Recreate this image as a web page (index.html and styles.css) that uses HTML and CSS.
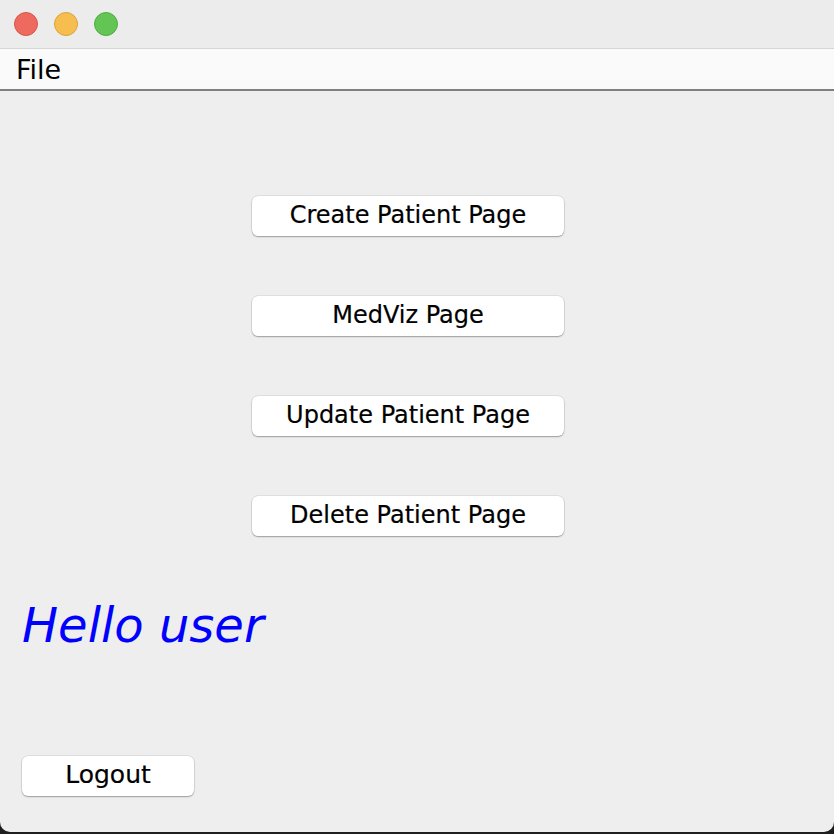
FILE: index.html
```html
<!DOCTYPE html>
<html>
<head>
<meta charset="utf-8">
<link rel="stylesheet" href="styles.css">
</head>
<body>
<div class="window">
  <div class="titlebar">
    <span class="light red"></span>
    <span class="light yellow"></span>
    <span class="light green"></span>
  </div>
  <div class="menubar"><span class="menu">File</span></div>
  <div class="content">
    <div class="actions">
      <button class="btn wide">Create Patient Page</button>
      <button class="btn wide">MedViz Page</button>
      <button class="btn wide">Update Patient Page</button>
      <button class="btn wide">Delete Patient Page</button>
    </div>
    <div class="hello">Hello user</div>
    <button class="btn logout">Logout</button>
  </div>
</div>
</body>
</html>
```
FILE: styles.css
```css
html, body {
  margin: 0;
  padding: 0;
  background: #1e1e1e;
}
body {
  width: 834px;
  height: 834px;
  overflow: hidden;
  font-family: "DejaVu Sans", "Liberation Sans", sans-serif;
}
.window {
  width: 834px;
  height: 832px;
  background: #eeeeee;
  border-radius: 0 0 10px 10px;
  overflow: hidden;
  display: flex;
  flex-direction: column;
}
.titlebar {
  height: 48px;
  background: #ececec;
  border-bottom: 1px solid #d6d6d6;
  display: flex;
  align-items: center;
  gap: 16px;
  padding-left: 14px;
  box-sizing: content-box;
}
.light {
  width: 24px;
  height: 24px;
  border-radius: 50%;
  box-sizing: border-box;
}
.red { background: #ee6a5f; border: 1px solid #d8564b; }
.yellow { background: #f5be4f; border: 1px solid #dca43b; }
.green { background: #62c554; border: 1px solid #4fae42; }
.menubar {
  height: 40px;
  background: #fafafa;
  border-bottom: 2px solid #808080;
  padding-left: 16px;
}
.menu {
  font-size: 27px;
  line-height: 42px;
  color: #000;
}
.content {
  flex: 1;
  display: flex;
  flex-direction: column;
  align-items: flex-start;
}
.actions {
  display: flex;
  flex-direction: column;
  gap: 60px;
  margin-top: 105px;
  margin-left: 252px;
}
.btn {
  font-family: "DejaVu Sans", "Liberation Sans", sans-serif;
  font-size: 24px;
  color: #000;
  background: #ffffff;
  border: none;
  border-radius: 6px;
  height: 40px;
  line-height: 38px;
  padding: 0 0 2px 0;
  box-sizing: border-box;
  box-shadow: 0 0 0 0.5px rgba(0, 0, 0, 0.12), 0 1px 1.5px rgba(0, 0, 0, 0.3);
  text-align: center;
  -webkit-text-stroke: 0.2px #000;
}
.wide { width: 312px; }
.hello {
  margin-top: 65px;
  margin-left: 22px;
  font-size: 48px;
  line-height: 48px;
  font-style: italic;
  color: #0000ff;
}
.logout {
  width: 172px;
  margin-top: 107px;
  margin-left: 22px;
  font-size: 25px;
}
```
